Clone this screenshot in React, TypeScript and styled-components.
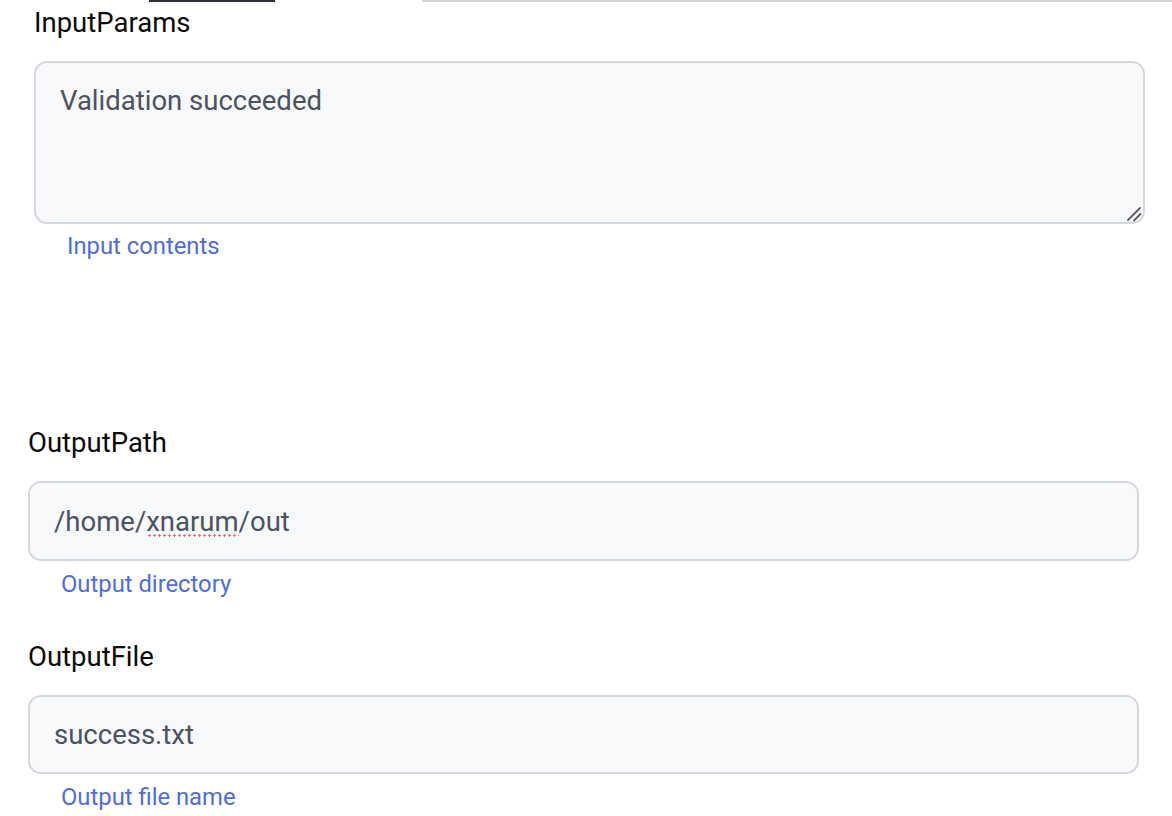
import React from "react";
import styled, { createGlobalStyle } from "styled-components";

const Global = createGlobalStyle`
  html, body { margin: 0; padding: 0; background: #ffffff; }
  body { font-family: Roboto, "Liberation Sans", Arial, sans-serif; }
  * { box-sizing: border-box; }
`;

const TabStrip = styled.div`
  display: flex;
  height: 2px;
`;

const TabSegment = styled.div<{ $w?: number; $color: string }>`
  flex: ${(p) => (p.$w ? `0 0 ${p.$w}px` : "1 1 auto")};
  background: ${(p) => p.$color};
`;

const Form = styled.div`
  display: flex;
  flex-direction: column;
  padding: 0 33px 0 28px;
`;

const Field = styled.div<{ $shift?: number; $top: number }>`
  display: flex;
  flex-direction: column;
  margin-top: ${(p) => p.$top}px;
  margin-left: ${(p) => p.$shift ?? 0}px;
  margin-right: ${(p) => -(p.$shift ?? 0)}px;
`;

const Label = styled.div`
  font-size: 27.5px;
  line-height: 32px;
  color: #0a0a0a;
  font-weight: 400;
  margin-bottom: 22px;
`;

const AreaWrap = styled.div`
  position: relative;
`;

const TextArea = styled.textarea`
  display: block;
  width: 100%;
  height: 163px;
  border: 2px solid #d4d7dc;
  border-radius: 13px;
  background: #f8f9fb;
  color: #4b5261;
  font-family: Roboto, "Liberation Sans", Arial, sans-serif;
  font-size: 27.5px;
  line-height: 40.8px;
  padding: 18px 24px;
  resize: none;
  outline: none;
`;

const Grip = styled.svg`
  position: absolute;
  right: 3px;
  bottom: 2px;
  width: 16px;
  height: 16px;
  pointer-events: none;
`;

const InputWrap = styled.div`
  position: relative;
`;

const TextInput = styled.input<{ $h: number }>`
  display: block;
  width: 100%;
  height: ${(p) => p.$h}px;
  border: 2px solid #d4d7dc;
  border-radius: 13px;
  background: #f8f9fb;
  color: #4b5261;
  font-family: Roboto, "Liberation Sans", Arial, sans-serif;
  font-size: 27.5px;
  padding: 0 24px;
  outline: none;
`;

const SpellMark = styled.span`
  position: absolute;
  left: 119px;
  top: 53px;
  width: 92px;
  height: 3px;
  background-image: radial-gradient(circle, #ef6f64 1.1px, transparent 1.4px);
  background-size: 5px 3px;
  background-repeat: repeat-x;
  pointer-events: none;
`;

const Helper = styled.div<{ $gap?: number }>`
  font-size: 23.8px;
  line-height: 28px;
  color: #4d6de0;
  margin-top: ${(p) => p.$gap ?? 9}px;
  padding-left: 33px;
`;

export default function App() {
  return (
    <>
      <Global />
      <TabStrip>
        <TabSegment $w={149} $color="transparent" />
        <TabSegment $w={126} $color="#2b2e3b" />
        <TabSegment $w={147} $color="transparent" />
        <TabSegment $color="#d3d6da" />
      </TabStrip>
      <Form>
        <Field $shift={6} $top={5}>
          <Label>InputParams</Label>
          <AreaWrap>
            <TextArea defaultValue="Validation succeeded" spellCheck={false} />
            <Grip viewBox="0 0 16 16">
              <path d="M2 14 L14 2" stroke="#5a5d63" strokeWidth="1.8" strokeLinecap="round" />
              <path d="M8 14.5 L14.5 8" stroke="#5a5d63" strokeWidth="1.8" strokeLinecap="round" />
            </Grip>
          </AreaWrap>
          <Helper $gap={8}>Input contents</Helper>
        </Field>
        <Field $top={167}>
          <Label>OutputPath</Label>
          <InputWrap>
            <TextInput $h={80} defaultValue="/home/xnarum/out" spellCheck={false} />
            <SpellMark />
          </InputWrap>
          <Helper>Output directory</Helper>
        </Field>
        <Field $top={43}>
          <Label>OutputFile</Label>
          <TextInput $h={79} defaultValue="success.txt" spellCheck={false} />
          <Helper>Output file name</Helper>
        </Field>
      </Form>
    </>
  );
}
